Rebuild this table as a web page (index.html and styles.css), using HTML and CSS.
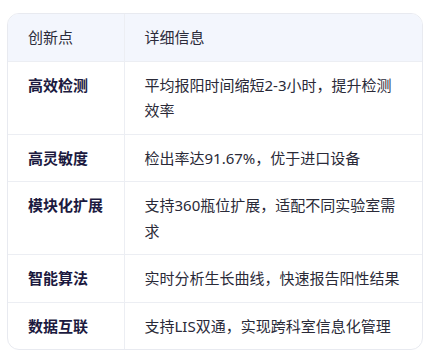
FILE: index.html
```html
<!DOCTYPE html>
<html lang="zh">
<head>
<meta charset="utf-8">
<link rel="stylesheet" href="styles.css">
</head>
<body>
<div class="card">
<table class="tbl">
<colgroup><col class="c1"><col class="c2"></colgroup>
<thead>
<tr><th>创新点</th><th>详细信息</th></tr>
</thead>
<tbody>
<tr><td class="k">高效检测</td><td>平均报阳时间缩短2-3小时，提升检测效率</td></tr>
<tr><td class="k">高灵敏度</td><td>检出率达91.67%，优于进口设备</td></tr>
<tr><td class="k">模块化扩展</td><td>支持360瓶位扩展，适配不同实验室需求</td></tr>
<tr><td class="k">智能算法</td><td>实时分析生长曲线，快速报告阳性结果</td></tr>
<tr><td class="k">数据互联</td><td>支持LIS双通，实现跨科室信息化管理</td></tr>
</tbody>
</table>
</div>
</body>
</html>
```
FILE: styles.css
```css
html, body { margin: 0; padding: 0; background: #ffffff; }
body {
  padding: 13px 15px 0 7px;
  font-family: "Noto Sans", "Noto Sans CJK SC", sans-serif;
  font-size: 15px;
  color: #2d2d3a;
}
.card {
  width: 414px;
  border: 1px solid #e8eaf0;
  border-radius: 12px;
  overflow: hidden;
  background: #fff;
}
.tbl {
  width: 100%;
  border-collapse: collapse;
  table-layout: fixed;
}
.c1 { width: 116px; }
.tbl th, .tbl td {
  padding: 11px 20px 10px;
  line-height: 25.5px;
  text-align: left;
  vertical-align: top;
  border-bottom: 1px solid #eceef3;
}
.tbl th + th, .tbl td + td { border-left: 1px solid #eceef3; }
.tbl tbody tr:last-child td { border-bottom: none; }
.tbl th {
  background: #f3f6fd;
  font-weight: 400;
  color: #2b2b3a;
}
.tbl td { color: #2a2a38; }
.tbl td.k { font-weight: 700; color: #1c1a3f; }
```
